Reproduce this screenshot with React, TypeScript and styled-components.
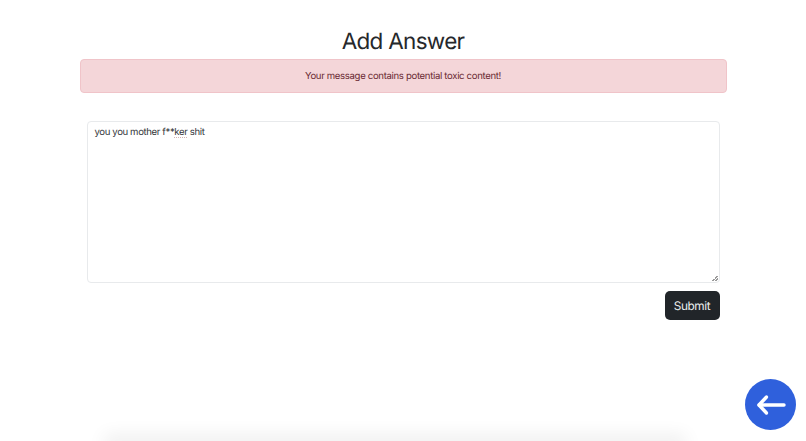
import React from "react";
import styled, { createGlobalStyle } from "styled-components";

const Global = createGlobalStyle`
  html, body { margin: 0; padding: 0; height: 100%; background: #fff; overflow: hidden; }
  body {
    font-family: Inter, "Liberation Sans", sans-serif;
    color: #212529;
    text-rendering: geometricPrecision;
  }
`;

const Page = styled.div`
  height: 441px;
  display: flex;
  flex-direction: column;
  align-items: center;
  overflow: hidden;
`;

const Main = styled.main`
  width: 647px;
  flex: 1;
  display: flex;
  flex-direction: column;
  padding-top: 26px;
`;

const Title = styled.h1`
  margin: 0 0 3px;
  height: 30px;
  line-height: 31px;
  font-size: 22.5px;
  font-weight: 400;
  letter-spacing: -0.7px;
  text-align: center;
  color: #26282b;
`;

const Alert = styled.div`
  box-sizing: border-box;
  height: 34px;
  display: flex;
  align-items: center;
  justify-content: center;
  background: #f4d6d9;
  border: 1px solid #f0c4c9;
  border-radius: 4px;
  font-size: 9.6px;
  letter-spacing: -0.34px;
  color: #6a2a33;
`;

const Form = styled.form`
  display: flex;
  flex-direction: column;
  align-items: flex-end;
  gap: 8px;
  margin: 28px 7px 0;
`;

const Field = styled.div`
  box-sizing: border-box;
  width: 100%;
  height: 162px;
  padding: 3px 7px;
  border: 1px solid #e8eaec;
  border-radius: 4px;
  font-size: 9.6px;
  letter-spacing: -0.38px;
  line-height: 15px;
  color: #33363a;
  overflow: auto;
  resize: vertical;

  &::-webkit-resizer {
    background: linear-gradient(
        135deg,
        transparent 50%,
        #9a9a9a 50%,
        #9a9a9a 60%,
        transparent 60%,
        transparent 74%,
        #9a9a9a 74%,
        #9a9a9a 84%,
        transparent 84%
      )
      no-repeat right 1px bottom 1px / 6px 6px;
  }
`;

const Misspelled = styled.span`
  text-decoration: underline dotted #d3b4b4;
  text-underline-offset: 2px;
`;

const Submit = styled.button`
  width: 55px;
  height: 29px;
  padding: 0;
  border: none;
  border-radius: 5px;
  background: #212529;
  color: #eceded;
  font-family: inherit;
  font-size: 11.8px;
  letter-spacing: -0.4px;
  text-rendering: geometricPrecision;
`;

const BackButton = styled.button`
  position: fixed;
  left: 745px;
  top: 379px;
  width: 51px;
  height: 51px;
  padding: 0;
  border: none;
  border-radius: 50%;
  background: #2f60dc;
  display: flex;
  align-items: center;
  justify-content: center;
`;

const FooterShadow = styled.div`
  width: 570px;
  height: 4px;
  margin: 0 16px -4px 0;
  flex: none;
  box-shadow: 0 0 18px 6px rgba(0, 0, 0, 0.07);
`;

export default function App() {
  return (
    <Page>
      <Global />
      <Main>
        <Title>Add Answer</Title>
        <Alert>Your message contains potential toxic content!</Alert>
        <Form>
          <Field>
            you you mother f**<Misspelled>ker</Misspelled> shit
          </Field>
          <Submit type="button">Submit</Submit>
        </Form>
      </Main>
      <FooterShadow />
      <BackButton type="button" aria-label="Back">
        <svg width="30" height="22" viewBox="0 0 30 22" fill="none" stroke="#fff" strokeWidth="3.4" strokeLinecap="round" strokeLinejoin="round">
          <path d="M3 11H28" />
          <path d="M10.5 3L3 11L10.5 19" />
        </svg>
      </BackButton>
    </Page>
  );
}
